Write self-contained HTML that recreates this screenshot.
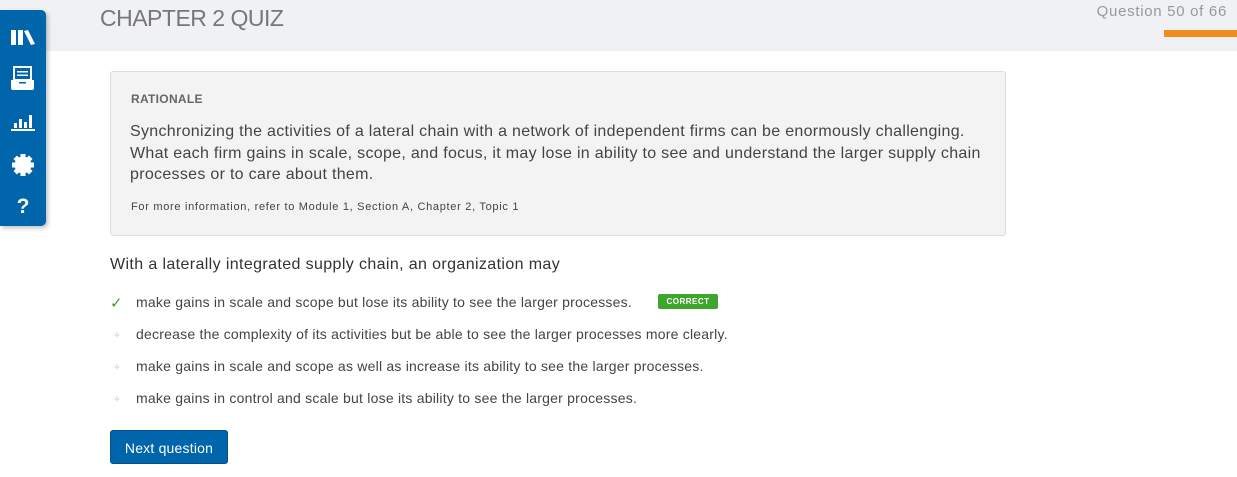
<!DOCTYPE html>
<html><head><style>
body{margin:0;width:1237px;height:477px;background:#fff;font-family:"Liberation Sans",sans-serif;position:relative;overflow:hidden;color:#333}
.hdr{position:absolute;left:0;top:0;width:1237px;height:51px;background:#f0f1f4}
.title{position:absolute;left:100px;top:5px;font-size:23px;color:#777;letter-spacing:-0.5px}
.qn{position:absolute;right:10px;top:3px;font-size:15px;color:#999;letter-spacing:0.7px}
.bar{position:absolute;left:1164px;top:30px;width:73px;height:7px;background:#f28c1d}
.side{position:absolute;left:0;top:10px;width:46px;height:216px;background:#0065aa;border-radius:0 5px 5px 0;box-shadow:2px 2px 4px rgba(0,0,0,.25)}
.side svg{position:absolute;left:10px}
.box{position:absolute;left:110px;top:71px;width:894px;height:163px;background:#f3f3f3;border:1px solid #ddd;border-radius:3px}
.rl{position:absolute;left:20px;top:20px;font-size:12px;font-weight:bold;color:#666;letter-spacing:0.3px}
.rt{position:absolute;left:19px;top:49px;width:880px;font-size:16px;line-height:21.5px;color:#444;letter-spacing:0.3px;white-space:nowrap}
.rf{position:absolute;left:20px;top:129px;font-size:11px;color:#444;letter-spacing:0.7px}
.q{position:absolute;left:110px;top:256px;font-size:16px;color:#333;letter-spacing:0.38px}
.opt{position:absolute;left:136px;font-size:14px;color:#444;letter-spacing:0.22px}
.dot{position:absolute;left:113px;font-size:9px;color:#bbb}
.chk{position:absolute;left:110px;top:294px;color:#4a9a2a;font-size:15px}
.tag{position:absolute;left:658px;top:294px;width:60px;height:15px;background:#3fa62d;color:#fff;font-size:8px;font-weight:bold;text-align:center;line-height:15px;letter-spacing:.5px;border-radius:2px}
.btn{position:absolute;left:110px;top:430px;width:118px;height:34px;background:#0065aa;border-radius:3px;color:#fff;font-size:14px;line-height:34px;text-align:center;border:1px solid #00508a;box-sizing:border-box;letter-spacing:0.2px}
</style></head><body>
<div class="hdr"></div>
<div class="title">CHAPTER 2 QUIZ</div>
<div class="qn">Question 50 of 66</div>
<div class="bar"></div>
<div class="side">
<svg style="top:18px" width="26" height="18" viewBox="0 0 26 18"><rect x="1" y="2" width="5" height="15" fill="#fff"/><rect x="8" y="2" width="5" height="15" fill="#fff"/><polygon points="14,3 18,2 25,16 21,17" fill="#fff"/></svg>
<svg style="top:56px" width="26" height="26" viewBox="0 0 26 26"><rect x="4" y="1" width="17" height="13" fill="none" stroke="#fff" stroke-width="2"/><rect x="7" y="5" width="11" height="1.5" fill="#fff"/><rect x="7" y="8.5" width="11" height="1.5" fill="#fff"/><path d="M1 14h23v8q0 2-2 2H3q-2 0-2-2z" fill="#fff"/><rect x="9" y="16" width="7" height="1.5" fill="#0065aa"/></svg>
<svg style="top:102px" width="26" height="20" viewBox="0 0 26 20"><rect x="4" y="11" width="3" height="5" fill="#fff"/><rect x="9" y="7" width="3" height="9" fill="#fff"/><rect x="14" y="10" width="3" height="6" fill="#fff"/><rect x="19" y="3" width="3" height="13" fill="#fff"/><rect x="1" y="17" width="24" height="2" fill="#fff"/></svg>
<svg style="top:142px" width="26" height="26" viewBox="0 0 26 26"><g fill="#fff"><circle cx="13" cy="13" r="8.5"/><g id="t"><rect x="10.5" y="2" width="5" height="22"/><rect x="2" y="10.5" width="22" height="5"/></g><use href="#t" transform="rotate(45 13 13)"/></g></svg>
<div style="position:absolute;left:0;width:46px;top:185px;text-align:center;color:#fff;font-weight:bold;font-size:21px">?</div>
</div>
<div class="box">
<div class="rl">RATIONALE</div>
<div class="rt">Synchronizing the activities of a lateral chain with a network of independent firms can be enormously challenging.<br>What each firm gains in scale, scope, and focus, it may lose in ability to see and understand the larger supply chain<br>processes or to care about them.</div>
<div class="rf">For more information, refer to Module 1, Section A, Chapter 2, Topic 1</div>
</div>
<div class="q">With a laterally integrated supply chain, an organization may</div>
<div class="chk">✓</div>
<div class="opt" style="top:294px">make gains in scale and scope but lose its ability to see the larger processes.</div>
<div class="tag">CORRECT</div>
<div class="dot" style="top:330px">✧</div>
<div class="opt" style="top:326px">decrease the complexity of its activities but be able to see the larger processes more clearly.</div>
<div class="dot" style="top:362px">✧</div>
<div class="opt" style="top:358px">make gains in scale and scope as well as increase its ability to see the larger processes.</div>
<div class="dot" style="top:394px">✧</div>
<div class="opt" style="top:390px">make gains in control and scale but lose its ability to see the larger processes.</div>
<div class="btn">Next question</div>
</body></html>
